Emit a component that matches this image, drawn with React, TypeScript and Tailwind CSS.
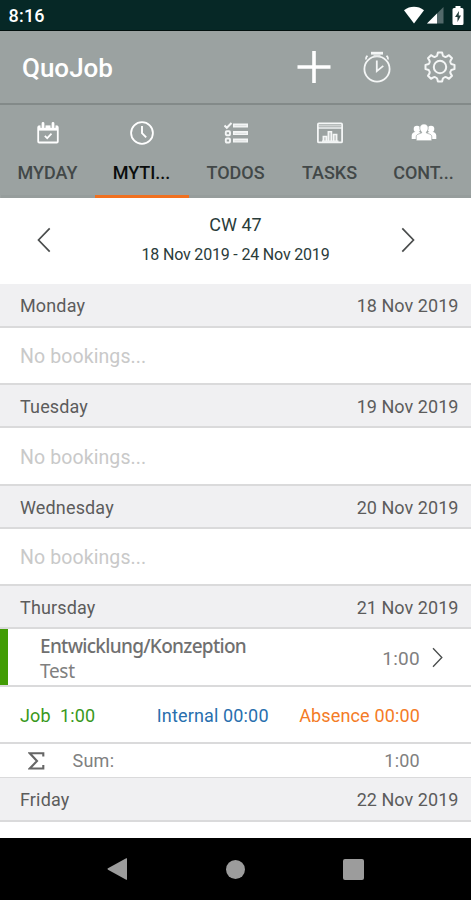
import clsx from "clsx";
import React from "react";

type IconProps = { className?: string };

const PlusIcon = () => (
  <svg width="34" height="34" viewBox="0 0 34 34" stroke="#fff" strokeWidth="3.6">
    <path d="M17 1v32M.5 17h33" />
  </svg>
);

const StopwatchIcon = () => (
  <svg width="30" height="32" viewBox="0 0 30 32" fill="none" stroke="#f4f6f6">
    <circle cx="15" cy="18" r="12.6" strokeWidth="1.8" />
    <path d="M9 2.2h12" strokeWidth="2.8" />
    <path d="M11.5 4.5h7" strokeWidth="2" stroke="#dfe2e2" />
    <path d="M4 8.5Q3.5 6.5 5.5 4.8M26 8.5Q26.5 6.5 24.5 4.8" strokeWidth="1.8" />
    <path d="M14.8 9.5v10.600l6.500-5.200" strokeWidth="1.8" />
  </svg>
);

const GearIcon = () => (
  <svg
    width="32"
    height="32"
    viewBox="0 0 32 32"
    fill="none"
    stroke="#f4f6f6"
    strokeWidth="2"
    strokeLinejoin="round"
  >
    <circle cx="16" cy="16" r="6.2" />
    <path d="M13.9 1.5h4.2l.7 2.7q.3.9 1.2 1.2l.9.4q.9.3 1.7-.1l2.4-1.5 3 3-1.5 2.4q-.4.8-.1 1.7l.4.9q.3.9 1.2 1.1l2.5.6v4.2l-2.5.6q-.9.2-1.2 1.1l-.4.9q-.3.9.1 1.7l1.5 2.4-3 3-2.4-1.5q-.8-.4-1.7-.1l-.9.4q-.9.3-1.2 1.2l-.7 2.7h-4.200l-.7-2.700q-.3-.9-1.200-1.200l-.9-.4q-.9-.3-1.700.1L7 27.800l-3-3 1.500-2.400q.4-.8.1-1.700l-.4-.9q-.3-.9-1.200-1.100l-2.500-.6v-4.200l2.500-.6q.9-.2 1.200-1.100l.4-.9q.3-.9-.1-1.700L4 7.200l3-3 2.400 1.500q.8.4 1.700.1l.9-.4q.9-.3 1.200-1.200z" />
  </svg>
);

const CalendarIcon = () => (
  <svg width="24" height="24" viewBox="0 0 24 24" fill="none" stroke="#fff">
    <rect x="2.2" y="5.5" width="19.6" height="16" rx="1" strokeWidth="1.8" />
    <path d="M2 7.2h20" strokeWidth="4.8" />
    <path d="M7 1.8v5M17 1.8v5" stroke="#9ba2a1" strokeWidth="5" />
    <path d="M7 2.5v3.8M17 2.5v3.8" strokeWidth="2.8" strokeLinecap="round" />
    <path d="M8.8 14.8l2.400 2.400 4.300-4.600" strokeWidth="1.7" />
  </svg>
);

const ClockIcon = () => (
  <svg width="24" height="24" viewBox="0 0 24 24" fill="none" stroke="#fff">
    <circle cx="12" cy="12" r="10.9" strokeWidth="1.8" />
    <path d="M12 5v7.2l4.2 4.2" strokeWidth="1.9" />
  </svg>
);

const ListIcon = () => (
  <svg width="24" height="24" viewBox="0 0 24 24" fill="none" stroke="#f4f6f6">
    <path d="M.5 4.5l2.3 2.3L7.5 2" strokeWidth="2" />
    <rect x="1.8" y="10.2" width="4.2" height="4" rx="1" strokeWidth="1.9" />
    <rect x="1.8" y="17.5" width="4.2" height="4" rx="1" strokeWidth="1.9" />
    <path d="M9 4.4h15M9 12.1h15M9 19.6h15" strokeWidth="4" />
    <path d="M10.5 4.6h12M10.5 12.3h12M10.5 19.8h12" stroke="#dde0e0" strokeWidth="1" />
  </svg>
);

const ChartIcon = () => (
  <svg width="28" height="24" viewBox="0 0 28 24" fill="none" stroke="#f4f6f6">
    <rect x="1.9" y="2.4" width="24.2" height="19" rx="1" strokeWidth="1.8" />
    <path d="M2 7h24" strokeWidth="1.4" />
    <path d="M3 4.7h22" stroke="#cdd1d0" strokeWidth="1.8" />
    <path
      d="M7.3 20v-4.5h3.2V20M12.3 20v-9.2h3.2V20M17.5 20v-6.5h3.2V20"
      fill="#c9cdcc"
      strokeWidth="1.5"
    />
    <path d="M6 20.2h16.5" strokeWidth="1.4" />
  </svg>
);

const PeopleIcon = () => (
  <svg width="26" height="24" viewBox="0 0 26 24" fill="#fff">
    <circle cx="6" cy="8" r="3.3" />
    <circle cx="20" cy="8" r="3.3" />
    <path d="M.7 18v-3.400c0-2.400 2-3.800 5.300-3.800s4 1 4 3V18zM25.300 18v-3.400c0-2.400-2-3.800-5.300-3.800s-4 1-4 3V18z" />
    <path
      d="M13 2.900c2.600 0 4.200 1.700 4.200 4.100 0 1.600-.7 3.200-1.800 4.100v.8l3.500 1.300c1.300.5 1.900 1.400 1.900 2.700v3.900H5.200v-3.900c0-1.300.6-2.200 1.900-2.700l3.500-1.300v-.8C9.500 10.200 8.800 8.600 8.800 7c0-2.400 1.600-4.100 4.200-4.100z"
      stroke="#9ba2a1"
      strokeWidth=".7"
    />
  </svg>
);

const Chevron = ({ className }: IconProps) => (
  <svg className={className} viewBox="0 0 14 26" fill="none" stroke="#4a4d4d" strokeWidth="1.7">
    <path d="M1.3 1.3L12.5 13 1.3 24.7" />
  </svg>
);

const tabs = [
  { label: "MYDAY", icon: <CalendarIcon /> },
  { label: "MYTI...", icon: <ClockIcon />, active: true },
  { label: "TODOS", icon: <ListIcon /> },
  { label: "TASKS", icon: <ChartIcon /> },
  { label: "CONT...", icon: <PeopleIcon /> },
];

const StatusBar = () => (
  <div className="h-[31px] shrink-0 flex items-center justify-between pl-[8.5px] pr-[7px] bg-[#062826] border-b border-[#02100f]">
    <span className="mt-[2px] text-lg leading-none font-medium text-white tracking-[0.2px]">
      8:16
    </span>
    <div className="flex items-center">
      <svg width="22" height="18" viewBox="0 0 22 18" fill="#fff">
        <path d="M1 4.2C7-.4 15-.4 21 4.2L11 17.5z" />
      </svg>
      <svg className="ml-[2px]" width="17" height="17" viewBox="0 0 17 17">
        <path d="M16.5 0v16.5H0z" fill="#53696a" />
        <path d="M10 6.5v10H0z" fill="#fff" />
      </svg>
      <svg className="ml-2" width="12" height="19" viewBox="0 0 12 19">
        <path
          d="M3.5 0h5v2H10q1.5 0 1.5 1.5v14q0 1.500-1.500 1.500H2q-1.500 0-1.500-1.500v-14Q.5 2 2 2h1.500z"
          fill="#fff"
        />
        <path d="M7 5l-4 6h2.500v5L9 9.500H6.700z" fill="#233e3c" />
      </svg>
    </div>
  </div>
);

const Header = () => (
  <div className="h-[74px] shrink-0 flex items-center justify-between pl-[22px] pr-[15px] bg-[#9ba2a1] border-b-2 border-[#838a89]">
    <h1 className="mt-px text-[26px] leading-none font-medium text-white">QuoJob</h1>
    <div className="flex items-center">
      <PlusIcon />
      <div className="ml-[31px] mr-[32px]">
        <StopwatchIcon />
      </div>
      <GearIcon />
    </div>
  </div>
);

const Tabs = () => (
  <div className="h-[92.5px] shrink-0 grid grid-cols-5 pl-px bg-[#9ba2a1]">
    {tabs.map(tab => (
      <div
        key={tab.label}
        className={clsx(
          "flex flex-col items-center pt-4 border-b-[3px] text-lg leading-none font-medium",
          tab.active ? "border-[#f07020] text-[#0a0d0d]" : "border-[#969d9c] text-[#424848]"
        )}
      >
        {tab.icon}
        <span className="mt-[19px] mr-px">{tab.label}</span>
      </div>
    ))}
  </div>
);

const WeekPicker = () => (
  <div className="h-[86.5px] shrink-0 flex items-center justify-between pl-[37px] pr-[56px] pb-[2px] text-[#2a3c3a]">
    <Chevron className="w-[14px] h-[26px] rotate-180" />
    <div className="flex flex-col items-center ml-[19px]">
      <span className="text-lg leading-6">CW 47</span>
      <span className="mt-[6px] text-base leading-6 tracking-[-0.18px]">
        18 Nov 2019 - 24 Nov 2019
      </span>
    </div>
    <Chevron className="w-[14px] h-[26px]" />
  </div>
);

type DayProps = {
  name: string;
  date: string;
  className?: string;
};

const DayHeader = ({ name, date, className }: DayProps) => (
  <div
    className={clsx(
      "shrink-0 flex items-center justify-between pt-[2px] pl-5 pr-[12.5px] bg-[#f0f0f2] border-b-2 border-[#dadadb] text-lg leading-none text-[#5c5c5c]",
      className
    )}
  >
    <span className="tracking-[0.15px]">{name}</span>
    <span className="tracking-[0.05px]">{date}</span>
  </div>
);

const NoBookings = ({ className }: { className: string }) => (
  <div
    className={clsx(
      "shrink-0 flex items-center pt-[3px] pl-5 border-b-2 border-[#dadadb] text-[19.5px] leading-none tracking-[0.1px] text-[#c9c9c9]",
      className
    )}
  >
    No bookings...
  </div>
);

const Booking = () => (
  <div className="h-[58px] shrink-0 flex items-center border-b-2 border-[#dadadb] text-[#808080]">
    <div className="w-2 h-full bg-[#429c05]" />
    <div className="flex-1 pt-[3px] ml-8 font-['Noto_Sans',sans-serif]">
      <div className="text-[19px] leading-[25px] font-medium tracking-[-0.7px] text-[#707070]">
        Entwicklung/Konzeption
      </div>
      <div className="text-[19px] leading-[25px] tracking-[-0.3px]">Test</div>
    </div>
    <span className="pt-[3px] text-[19px] leading-none tracking-[0.3px]">1:00</span>
    <Chevron className="w-[11px] h-[21px] ml-[12px] mr-[28px]" />
  </div>
);

const Summary = () => (
  <>
    <div className="h-[57px] shrink-0 flex items-center justify-between pt-[2px] pl-5 pr-[51px] border-b-2 border-[#dadadb] text-lg leading-none tracking-[0.15px]">
      <span className="text-[#389820] whitespace-pre">Job  1:00</span>
      <span className="ml-[31px] text-[#286fae]">Internal 00:00</span>
      <span className="text-[#f47b26]">Absence 00:00</span>
    </div>
    <div className="h-[34px] shrink-0 flex items-center pl-7 pr-[51px] border-b border-[#dadadb] text-lg leading-none text-[#808080]">
      <svg width="17" height="18" viewBox="0 0 17 18" fill="none" stroke="#666" strokeWidth="2.1">
        <path d="M15.3 4.5V1.3H1.8L9 9 1.8 16.5h13.5v-3.4" />
      </svg>
      <span className="ml-[27.5px] flex-1 tracking-[0.25px]">Sum:</span>
      <span className="tracking-[0.25px]">1:00</span>
    </div>
  </>
);

const NavBar = () => (
  <div className="h-[62px] shrink-0 flex items-center justify-between px-[107px] bg-black">
    <svg width="21" height="22" viewBox="0 0 21 22" fill="#9c9c9c">
      <path d="M20 .5v21q0 .5-.8.2L1 11.7q-1-.7 0-1.4L19.2.3q.8-.4.8.2z" />
    </svg>
    <div className="w-[19px] h-[19px] rounded-full bg-[#9c9c9c]" />
    <div className="w-[21px] h-[21px] rounded-xs bg-[#9c9c9c]" />
  </div>
);

const App = () => (
  <div className="w-[471px] h-[900px] flex flex-col overflow-hidden bg-white font-[Roboto,sans-serif]">
    <StatusBar />
    <Header />
    <Tabs />
    <WeekPicker />
    <DayHeader name="Monday" date="18 Nov 2019" className="h-[44px]" />
    <NoBookings className="h-[57px]" />
    <DayHeader name="Tuesday" date="19 Nov 2019" className="h-[43px]" />
    <NoBookings className="h-[58px]" />
    <DayHeader name="Wednesday" date="20 Nov 2019" className="h-[43px]" />
    <NoBookings className="h-[57px]" />
    <DayHeader name="Thursday" date="21 Nov 2019" className="h-[43px]" />
    <Booking />
    <Summary />
    <DayHeader name="Friday" date="22 Nov 2019" className="h-[44px]" />
    <div className="flex-1" />
    <NavBar />
  </div>
);

export default App;
